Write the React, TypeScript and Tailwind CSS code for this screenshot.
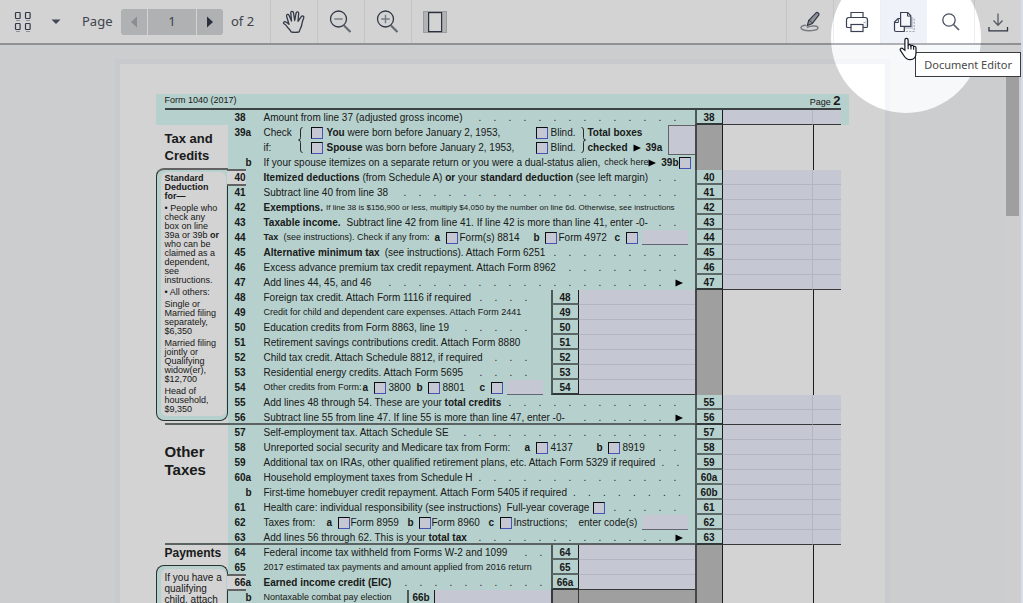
import { useState, type ReactNode } from "react";

/* ---------- Toolbar icons ---------- */

function ThumbnailsIcon() {
  return (
    <svg width="18" height="22" viewBox="0 0 18 22" fill="none" stroke="#3d4556" strokeWidth="1.2">
      <rect x="1.5" y="1.5" width="4.6" height="6" rx="0.8" />
      <rect x="11.5" y="1.5" width="4.6" height="6" rx="0.8" />
      <rect x="1.5" y="12.5" width="4.6" height="6" rx="0.8" />
      <rect x="11.5" y="12.5" width="4.6" height="6" rx="0.8" />
      <path d="M2 9.5h4M12 9.5h4M2 20.5h4M12 20.5h4" stroke="#aab0b8" />
    </svg>
  );
}

function HandIcon() {
  return (
    <svg width="24" height="24" viewBox="0 0 24 24" fill="#fff" stroke="#3d4556" strokeWidth="1.3" strokeLinejoin="round">
      <path d="M9 21.8C8.300 20 6.500 18.700 5 16.600 4 15.200 3.200 14.500 2 13.800 .8 12.900 1.900 11.300 3.500 11.800 5 12.300 6 13.300 7 14.300L4.600 6.200C4.100 4.300 6.400 3.700 7.100 5.400L9.500 11 8.800 3C8.700 1 11.200.9 11.500 2.800L12.700 10.500 14.100 3C14.500 1.200 16.900 1.600 16.700 3.400L16 11.300 19.300 6.600C20.400 5.200 22.400 6.300 21.700 7.900 20.400 10.800 20.100 13 19.600 15.500 19.100 18 17.600 19.300 17.200 21.800Q13 22.800 9 21.800Z" />
    </svg>
  );
}

function ZoomIcon({ plus = false }: { plus?: boolean }) {
  return (
    <svg width="24" height="24" viewBox="1 0 24 24" fill="none">
      <path d="M16 15.500L22.500 22" stroke="#7c828c" strokeWidth="2.2" />
      <circle cx="10.500" cy="9" r="8" stroke="#3d4556" strokeWidth="1.3" />
      <path d={plus ? "M6.300 9h8.400M10.500 4.800v8.400" : "M6.300 9h8.400"} stroke="#8f959d" strokeWidth="1.4" />
    </svg>
  );
}

function FitPageIcon() {
  return (
    <svg width="24" height="22" viewBox="0 0 24 22">
      <rect x="0.5" y="0.5" width="23" height="21" fill="#d8d9db" stroke="#bcbec2" />
      <rect x="5.6" y="1.6" width="13" height="19" fill="#fff" stroke="#343c4d" strokeWidth="1.2" />
    </svg>
  );
}

function AnnotateIcon() {
  return (
    <svg width="22" height="22" viewBox="0 0 22 22" fill="none">
      <path
        d="M7 14.200c-3.200.2-5 1.200-5 2.500 0 2 4 3.200 8.800 3 4.700-.1 8.200-1.300 8.200-2.900 0-1.500-3-2-5.600-1.700-2.200.3-4.200.7-5.600 1.400"
        stroke="#92979f"
        strokeWidth="1.500"
      />
      <path d="M9.800 9.300L17.300 1.600c.8-.8 3.300 1 2.600 2.300L13.300 12.600l-5 2z" fill="#aeb2b8" stroke="#3d4556" strokeWidth="1.200" />
      <path d="M9.800 9.300c1.500.5 2.700 1.700 3.500 3.300" stroke="#3d4556" />
    </svg>
  );
}

function PrinterIcon() {
  return (
    <svg width="24" height="22" viewBox="0 0 24 22" fill="none" stroke="#3a4152" strokeWidth="1.200">
      <path d="M6 6.500V1.500h12v5" />
      <path d="M6 16.500H2.500A1 1 0 0 1 1.500 15.500V9a2.500 2.500 0 0 1 2.500-2.500h16A2.500 2.500 0 0 1 22.500 9v6.500a1 1 0 0 1-1 1H18" />
      <path d="M21.300 8.500v6.700h-3" stroke="#d3d6db" />
      <rect x="6" y="13.500" width="12" height="7" fill="#fff" />
      <path d="M18.500 11.500h2" stroke="#a4aab4" />
    </svg>
  );
}

function DocumentEditorIcon() {
  return (
    <svg width="24" height="22" viewBox="0 0 24 22" fill="none">
      <path d="M18.500 8h3.700v12.500H13" stroke="#a4a9b3" strokeWidth="1.200" strokeDasharray="2 1.200" />
      <path d="M12.500 16.800H20V6" stroke="#c6cad1" strokeWidth="2" />
      <path d="M8.500 7.500H6L2.500 11v8a1.500 1.500 0 0 0 1.500 1.500H12.300v-5" fill="#f4f6fa" stroke="#3a4152" strokeWidth="1.200" />
      <path d="M6.300 8v3.500H3" stroke="#3a4152" />
      <path d="M8.600 1.500h7.200L18.800 4.800v10.500H8.600z" fill="#f4f6fa" stroke="#3a4152" strokeWidth="1.200" />
      <path d="M15.500 1.800v3.300h3" stroke="#3a4152" />
    </svg>
  );
}

function SearchIcon() {
  return (
    <svg width="20" height="20" viewBox="0 0 20 20" fill="none">
      <circle cx="8" cy="8" r="6.200" stroke="#4a5160" strokeWidth="1.300" />
      <path d="M12.500 12.500L18 18" stroke="#5a606d" strokeWidth="1.700" />
    </svg>
  );
}

function DownloadIcon() {
  return (
    <svg width="22" height="22" viewBox="0 0 22 22" fill="none" strokeWidth="1.300">
      <path d="M11 2.500v11.500M6.500 9.500l4.500 4.700L15.500 9.500" stroke="#6a707b" />
      <path d="M2 16v3.800h18.500V16" stroke="#3a4152" />
    </svg>
  );
}

function PointerIcon() {
  return (
    <svg width="19" height="24" viewBox="0 0 20 25">
      <path
        d="M6.200 13.800V3.100c0-2.400 3.400-2.400 3.400 0v5.600c.7-1.300 2.900-1 3 .5.800-1 2.700-.7 2.800.8.900-.7 2.500-.2 2.500 1.200v5.600c0 4.200-2.300 7-6.200 7-3.400 0-4.700-1.400-6.300-3.900L1.500 14c-1-1.800 1.200-3 2.600-1.800z"
        fill="#fff"
        stroke="#171a24"
        strokeWidth="1.300"
      />
      <path d="M9.600 8.500v4.300M12.600 9v4M15.400 10v3.300" stroke="#171a24" strokeWidth="1.200" />
    </svg>
  );
}

function ToolButton({ label, active, line = "left", children }: { label: string; active?: boolean; line?: "left" | "none"; children: ReactNode }) {
  return (
    <button
      type="button"
      aria-label={label}
      className={`flex h-full w-[47px] items-center justify-center ${line === "left" ? "border-l border-[#eceef1]" : ""} ${active ? "bg-[#eff2f8]" : ""}`}
    >
      {children}
    </button>
  );
}

function Toolbar() {
  const [page, setPage] = useState("1");
  return (
    <header className="flex h-[45px] shrink-0 items-center border-b-2 border-[#adb0b5] bg-white font-['Noto_Sans',sans-serif] text-[13px] text-[#4b5260]">
      <button type="button" aria-label="Thumbnails" className="ml-3.5 flex items-center">
        <ThumbnailsIcon />
      </button>
      <button type="button" aria-label="Thumbnail options" className="ml-[18px] flex items-center">
        <svg width="12" height="6" viewBox="0 0 12 6">
          <path d="M1.500 0.500h9L6 5z" fill="#4e5666" />
        </svg>
      </button>
      <label htmlFor="page-number" className="ml-5 w-[39px]">
        Page
      </label>
      <div className="flex h-[26px] gap-px overflow-hidden rounded-[3px]">
        <button type="button" aria-label="Previous page" className="flex w-[26px] items-center justify-center bg-[#d5d6d8]" onClick={() => setPage("1")}>
          <svg width="8" height="12" viewBox="0 0 8 12">
            <path d="M7 0.500v11L1 6z" fill="#a7abb1" />
          </svg>
        </button>
        <input
          id="page-number"
          value={page}
          onChange={(e) => setPage(e.target.value)}
          className="w-[48px] bg-[#d5d6d8] text-center outline-none"
        />
        <button type="button" aria-label="Next page" className="flex w-[26px] items-center justify-center bg-[#d5d6d8]" onClick={() => setPage("2")}>
          <svg width="8" height="12" viewBox="0 0 8 12">
            <path d="M1 0.500v11L7 6z" fill="#333b49" />
          </svg>
        </button>
      </div>
      <span className="ml-2 w-[39px]">of 2</span>
      <ToolButton label="Pan">
        <HandIcon />
      </ToolButton>
      <ToolButton label="Zoom out">
        <ZoomIcon />
      </ToolButton>
      <ToolButton label="Zoom in">
        <ZoomIcon plus />
      </ToolButton>
      <ToolButton label="Fit page">
        <FitPageIcon />
      </ToolButton>
      <div className="ml-auto flex h-full">
        <ToolButton label="Annotate">
          <AnnotateIcon />
        </ToolButton>
        <ToolButton label="Print">
          <PrinterIcon />
        </ToolButton>
        <ToolButton label="Document Editor" active>
          <DocumentEditorIcon />
        </ToolButton>
        <ToolButton label="Search" line="none">
          <SearchIcon />
        </ToolButton>
        <ToolButton label="Download">
          <DownloadIcon />
        </ToolButton>
      </div>
    </header>
  );
}

/* ---------- Form parts ---------- */

function Check({ label }: { label: string }) {
  return (
    <input
      type="checkbox"
      aria-label={label}
      className="size-3 shrink-0 appearance-none border border-t-[#111] border-r-[#5866d8] border-b-[#5866d8] border-l-[#111] bg-[#eff1ff] checked:bg-[#5866d8]"
    />
  );
}

function Arrow() {
  return (
    <svg width="8" height="8" viewBox="0 0 8 8" className="shrink-0">
      <path d="M0.500 0.500L8 4L0.500 7.500z" fill="#000" />
    </svg>
  );
}

function Brace({ flip = false }: { flip?: boolean }) {
  return (
    <svg width="5" height="26" viewBox="0 0 5 26" fill="none" stroke="#333" className="shrink-0">
      <path d={flip ? "M0.500 0.500Q2.500 .5 2.500 3V10.500Q2.500 13 4.500 13Q2.500 13 2.500 15.500V23Q2.500 25.500 .5 25.500" : "M4.500 0.500Q2.500 .5 2.500 3V10.500Q2.500 13 .5 13Q2.500 13 2.500 15.500V23Q2.500 25.500 4.500 25.500"} />
    </svg>
  );
}

function Leaders({ count, arrow, end = "wide" }: { count: number; arrow?: boolean; end?: "wide" | "inner" | "tight" }) {
  const pad = { wide: "pr-3", inner: "pr-[17px]", tight: "pr-0.5" }[end];
  return (
    <span aria-hidden="true" className={`ml-auto flex shrink-0 ${pad}`}>
      {Array.from({ length: count }, (_, i) => (
        <span key={i} className="w-[15px] text-center">
          .
        </span>
      ))}
      {arrow && (
        <span className="flex w-[15px] items-center justify-end">
          <Arrow />
        </span>
      )}
    </span>
  );
}

function Field({ label, className }: { label: string; className: string }) {
  return <input type="text" aria-label={label} className={`h-[15px] border-b border-[#77798a] bg-[#eff1ff] outline-none ${className}`} />;
}

function Amount({ id, last, compact }: { id: string; last?: boolean; compact?: boolean }) {
  const line = last ? "border-b-[#444]" : "border-b-[#d9dbe9]";
  return (
    <div className={`flex h-[15px] ${compact ? "flex-1" : "w-[118px]"}`}>
      <input type="text" aria-label={`Line ${id} dollars`} className={`min-w-0 flex-1 border-r border-b border-r-[#d9dbe9] bg-[#eff1ff] outline-none ${line}`} />
      <input type="text" aria-label={`Line ${id} cents`} className={`w-[28px] border-b bg-[#eff1ff] outline-none ${line}`} />
    </div>
  );
}

function LineBox({ id, last }: { id: string; last?: boolean }) {
  return (
    <div className={`flex h-[15px] w-[28px] shrink-0 items-center justify-center border-b-2 border-l-2 border-r border-l-[#5f6d6a] border-r-[#222] pt-0.5 font-bold ${last ? "border-b-[#3c4443]" : "border-b-[#6f7e7b]"}`}>
      {id}
    </div>
  );
}

function Blank() {
  return (
    <div className="flex shrink-0 self-stretch">
      <div className="w-[28px] border-r border-l-2 border-r-[#222] border-l-[#555] bg-[#c0c0c0]" />
      <div className="w-[91px] border-r border-[#222] bg-white" />
      <div className="w-[35px] bg-white" />
    </div>
  );
}

type LineProps = {
  no: string;
  box?: string;
  inner?: string;
  last?: boolean;
  tab?: boolean;
  extend?: boolean;
  children: ReactNode;
};

function Line({ no, box, inner, last, tab, extend, children }: LineProps) {
  return (
    <div className="flex h-[15px] leading-[15px]">
      <div
        className={`shrink-0 font-bold whitespace-nowrap ${tab ? "relative -mt-px -ml-px h-[17px] w-[19px] border-y-2 border-[#777] bg-white pl-2 leading-[13px]" : "w-[18px] pl-[7px]"} ${no === "b" ? "text-right" : ""}`}
      >
        {no === "b" ? <span className="-mr-1.5">b</span> : no}
      </div>
      <div className="ml-[18px] flex min-w-0 flex-1 items-center whitespace-nowrap">{children}</div>
      {inner && (
        <div className="flex w-[144px] shrink-0">
          <LineBox id={inner} last={last} />
          <Amount id={inner} last={last} compact />
        </div>
      )}
      {box ? (
        <>
          <LineBox id={box} last={last} />
          <Amount id={box} last={last} />
          <div className={`w-2 shrink-0 ${extend ? "" : "bg-white"}`} />
        </>
      ) : (
        <Blank />
      )}
    </div>
  );
}

const B = ({ children }: { children: ReactNode }) => <b className="font-bold">{children}</b>;

function Section({ aside, children }: { aside: ReactNode; children: ReactNode }) {
  return (
    <section className="flex">
      <div className="flex w-[72px] shrink-0 flex-col">{aside}</div>
      <div className="min-w-0 flex-1 bg-[#dcfdf8]">{children}</div>
    </section>
  );
}

function Rule() {
  return (
    <div className="-mt-0.5 flex">
      <div className="ml-[9px] h-0.5 flex-1 bg-[#6d7876]" />
      <div className="w-[154px]" />
    </div>
  );
}

function TaxForm() {
  return (
    <article className="font-['Liberation_Sans',Arial,sans-serif] text-[10px] text-[#1d2322]">
      <div className="bg-[#dcfdf8]">
        <div className="mr-2 ml-[9px] flex h-4 items-center justify-between border-b-2 border-[#4a5250]">
          <span className="text-[9px]">Form 1040 (2017)</span>
          <span className="text-[9px] leading-[13px]">
            Page <b className="text-[13px]">2</b>
          </span>
        </div>
        <div className="pl-[72px]">
          <Line no="38" box="38" last extend>
            Amount from line 37 (adjusted gross income)
            <Leaders count={14} />
          </Line>
        </div>
      </div>

      <Section
        aside={
          <>
            <h2 className="h-[43px] pt-[5px] pl-[9px] text-[13px] leading-[17px] font-bold">
              Tax and
              <br />
              Credits
            </h2>
            <div className="h-[253px] rounded-l-lg rounded-br-lg border border-t-2 border-[#333a39] border-t-[#777] bg-[#dcfdf8] pt-0.5 pr-px pb-1 pl-1">
              <div className="flex h-full flex-col gap-[3px] rounded-md bg-white pt-0.5 pl-1 text-[9px] leading-[9px] whitespace-nowrap">
                <p className="font-bold">
                  Standard
                  <br />
                  Deduction
                  <br />
                  for—
                </p>
                <p>
                  • People who
                  <br />
                  check any
                  <br />
                  box on line
                  <br />
                  39a or 39b <B>or</B>
                  <br />
                  who can be
                  <br />
                  claimed as a<br />
                  dependent,
                  <br />
                  see
                  <br />
                  instructions.
                </p>
                <p>• All others:</p>
                <p>
                  Single or
                  <br />
                  Married filing
                  <br />
                  separately,
                  <br />
                  $6,350
                </p>
                <p>
                  Married filing
                  <br />
                  jointly or
                  <br />
                  Qualifying
                  <br />
                  widow(er),
                  <br />
                  $12,700
                </p>
                <p>
                  Head of
                  <br />
                  household,
                  <br />
                  $9,350
                </p>
              </div>
            </div>
          </>
        }
      >
        <div className="flex h-[45px]">
          <div className="min-w-0 flex-1">
            <div className="flex h-[30px] leading-[15px] whitespace-nowrap">
              <div className="w-9 pl-[7px] font-bold">39a</div>
              <div className="w-[34px]">
                Check
                <br />
                if:
              </div>
              <div className="flex w-[13px] items-center">
                <Brace />
              </div>
              <div className="w-[225px]">
                <div className="flex h-[15px] items-center gap-1">
                  <Check label="You were born before January 2, 1953" />
                  <span>
                    <B>You</B> were born before January 2, 1953,
                  </span>
                </div>
                <div className="flex h-[15px] items-center gap-1">
                  <Check label="Spouse was born before January 2, 1953" />
                  <span>
                    <B>Spouse</B> was born before January 2, 1953,
                  </span>
                </div>
              </div>
              <div className="w-[45px]">
                <label className="flex h-[15px] items-center gap-[3px]">
                  <Check label="You are blind" />
                  Blind.
                </label>
                <label className="flex h-[15px] items-center gap-[3px]">
                  <Check label="Spouse is blind" />
                  Blind.
                </label>
              </div>
              <div className="flex w-[7px] items-center">
                <Brace flip />
              </div>
              <div className="flex-1 font-bold">
                Total boxes
                <div className="flex items-center gap-[5px]">
                  checked <Arrow /> 39a
                </div>
              </div>
              <input type="text" aria-label="Total boxes checked" className="h-[30px] w-[27px] border border-r-0 border-[#777] bg-[#eff1ff] outline-none" />
            </div>
            <div className="flex h-[15px] items-center leading-[15px] whitespace-nowrap">
              <div className="w-9 pl-[18px] font-bold">b</div>
              <span>If your spouse itemizes on a separate return or you were a dual-status alien,</span>
              <span className="ml-1 text-[9px]">check here</span>
              <Arrow />
              <span className="ml-auto font-bold">39b</span>
              <span className="flex w-4">
                <Check label="Line 39b" />
              </span>
            </div>
          </div>
          <Blank />
        </div>
        <Line no="40" box="40" tab>
          <span>
            <B>Itemized deductions</B> (from Schedule A) <B>or</B> your <B>standard deduction</B> (see left margin)
          </span>
          <Leaders count={2} />
        </Line>
        <Line no="41" box="41">
          Subtract line 40 from line 38
          <Leaders count={19} />
        </Line>
        <Line no="42" box="42">
          <B>Exemptions.</B>
          <span className="ml-[3px] text-[8px]">If line 38 is $156,900 or less, multiply $4,050 by the number on line 6d. Otherwise, see instructions</span>
        </Line>
        <Line no="43" box="43">
          <B>Taxable income.</B>
          <span className="ml-1.5">Subtract line 42 from line 41. If line 42 is more than line 41, enter -0-</span>
          <Leaders count={2} />
        </Line>
        <Line no="44" box="44">
          <span className="w-5 text-[9px] font-bold">Tax</span>
          <span className="w-[151px] text-[9px]">(see instructions). Check if any from:</span>
          <span className="w-[11px] font-bold">a</span>
          <Check label="Form 8814" />
          <span className="ml-0.5 w-[74px]">Form(s) 8814</span>
          <span className="w-[11px] font-bold">b</span>
          <Check label="Form 4972" />
          <span className="ml-0.5 w-[56px]">Form 4972</span>
          <span className="w-[11px] font-bold">c</span>
          <Check label="Other form" />
          <Field label="Other form number" className="ml-1 w-[46px]" />
        </Line>
        <Line no="45" box="45">
          <B>Alternative minimum tax</B>
          <span className="ml-[5px]">(see instructions). Attach Form 6251</span>
          <Leaders count={9} />
        </Line>
        <Line no="46" box="46">
          Excess advance premium tax credit repayment. Attach Form 8962
          <Leaders count={8} />
        </Line>
        <Line no="47" box="47" last>
          Add lines 44, 45, and 46
          <Leaders count={19} arrow />
        </Line>
        <Line no="48" inner="48">
          Foreign tax credit. Attach Form 1116 if required
          <Leaders count={4} end="inner" />
        </Line>
        <Line no="49" inner="49">
          <span className="text-[9px]">Credit for child and dependent care expenses. Attach Form 2441</span>
        </Line>
        <Line no="50" inner="50">
          Education credits from Form 8863, line 19
          <Leaders count={5} end="inner" />
        </Line>
        <Line no="51" inner="51">
          Retirement savings contributions credit. Attach Form 8880
        </Line>
        <Line no="52" inner="52">
          Child tax credit. Attach Schedule 8812, if required
          <Leaders count={3} end="inner" />
        </Line>
        <Line no="53" inner="53">
          Residential energy credits. Attach Form 5695
          <Leaders count={4} end="inner" />
        </Line>
        <Line no="54" inner="54" last>
          <span className="w-[99px] text-[9px]">Other credits from Form:</span>
          <span className="w-[11px] font-bold">a</span>
          <Check label="Form 3800" />
          <span className="ml-[3px] w-7">3800</span>
          <span className="w-[11px] font-bold">b</span>
          <Check label="Form 8801" />
          <span className="ml-[3px] w-[37px]">8801</span>
          <span className="w-[11px] font-bold">c</span>
          <Check label="Other credit form" />
          <Field label="Other credit form number" className="ml-1 w-9" />
        </Line>
        <Line no="55" box="55">
          <span>
            Add lines 48 through 54. These are your <B>total credits</B>
          </span>
          <Leaders count={12} />
        </Line>
        <Line no="56" box="56" last>
          Subtract line 55 from line 47. If line 55 is more than line 47, enter -0-
          <Leaders count={6} arrow />
        </Line>
      </Section>
      <Rule />

      <Section
        aside={
          <h2 className="pt-[18px] pl-[9px] text-[15px] leading-[18px] font-bold">
            Other
            <br />
            Taxes
          </h2>
        }
      >
        <Line no="57" box="57">
          Self-employment tax. Attach Schedule SE
          <Leaders count={15} />
        </Line>
        <Line no="58" box="58">
          <span className="w-[261px]">Unreported social security and Medicare tax from Form:</span>
          <span className="w-[11px] font-bold">a</span>
          <Check label="Form 4137" />
          <span className="ml-[3px] w-[46px]">4137</span>
          <span className="w-[11px] font-bold">b</span>
          <Check label="Form 8919" />
          <span className="ml-[3px]">8919</span>
          <Leaders count={2} />
        </Line>
        <Line no="59" box="59">
          Additional tax on IRAs, other qualified retirement plans, etc. Attach Form 5329 if required
          <Leaders count={2} />
        </Line>
        <Line no="60a" box="60a">
          Household employment taxes from Schedule H
          <Leaders count={14} />
        </Line>
        <Line no="b" box="60b">
          First-time homebuyer credit repayment. Attach Form 5405 if required
          <Leaders count={8} />
        </Line>
        <Line no="61" box="61">
          <span className="w-[243px]">Health care: individual responsibility (see instructions)</span>
          <span className="w-[86px]">Full-year coverage</span>
          <Check label="Full-year coverage" />
          <Leaders count={5} />
        </Line>
        <Line no="62" box="62">
          <span className="w-[63px]">Taxes from:</span>
          <span className="w-[11px] font-bold">a</span>
          <Check label="Form 8959" />
          <span className="ml-px w-[57px]">Form 8959</span>
          <span className="w-[11px] font-bold">b</span>
          <Check label="Form 8960" />
          <span className="ml-px w-[57px]">Form 8960</span>
          <span className="w-[11px] font-bold">c</span>
          <Check label="Instructions" />
          <span className="ml-0.5 w-[65px]">Instructions;</span>
          <span className="w-[63px]">enter code(s)</span>
          <Field label="Codes" className="w-[46px]" />
        </Line>
        <Line no="63" box="63" last>
          <span>
            Add lines 56 through 62. This is your <B>total tax</B>
          </span>
          <Leaders count={13} arrow />
        </Line>
      </Section>
      <Rule />

      <Section
        aside={
          <>
            <h2 className="h-5 pl-[9px] text-[12px] leading-[17px] font-bold">Payments</h2>
            <div className="flex-1 rounded-t-lg border border-b-0 border-[#333a39] bg-[#dcfdf8] pt-[3px] pr-px pl-1">
              <p className="h-full rounded-t-md bg-white pt-[3px] pl-1 text-[10px] leading-[11px] whitespace-nowrap">
                If you have a<br />
                qualifying
                <br />
                child, attach
              </p>
            </div>
          </>
        }
      >
        <Line no="64" inner="64">
          Federal income tax withheld from Forms W-2 and 1099
          <Leaders count={2} end="tight" />
        </Line>
        <Line no="65" inner="65">
          <span className="text-[9px]">2017 estimated tax payments and amount applied from 2016 return</span>
        </Line>
        <Line no="66a" inner="66a" last tab>
          <B>Earned income credit (EIC)</B>
          <Leaders count={10} end="tight" />
        </Line>
        <div className="flex h-[30px] leading-[15px]">
          <div className="w-9 pl-[18px] font-bold">b</div>
          <div className="flex-1 text-[9px] whitespace-nowrap">Nontaxable combat pay election</div>
          <div className="flex h-[15px] w-[144px]">
            <LineBox id="66b" />
            <Amount id="66b" compact />
          </div>
          <div className="w-[28px] border-r border-l-2 border-[#444] bg-[#c0c0c0]" />
          <div className="w-[116px] bg-[#c0c0c0]" />
          <Blank />
        </div>
      </Section>
    </article>
  );
}

export default function App() {
  return (
    <div className="relative flex h-screen flex-col overflow-hidden border-r-2 border-[#d8dde8] bg-[#f7f8fa]">
      <Toolbar />
      <div className="flex min-h-0 flex-1">
        <main className="min-w-0 flex-1 overflow-hidden pt-[19px]">
          <div className="mx-auto w-full max-w-[765px] bg-white px-9 pt-[30px] shadow-[0_0_0_5px_#f3f5f9]">
            <TaxForm />
          </div>
        </main>
        <div className="w-[17px] shrink-0 bg-[#f9f9fa] px-0.5 pt-[17px]">
          <div className="h-[154px] bg-[#c1c1c1]" />
        </div>
      </div>

      <div className="pointer-events-none absolute -top-[37px] right-10 size-[150px] rounded-full shadow-[0_0_0_1200px_rgba(0,0,0,0.173)]" />
      <div role="tooltip" className="absolute top-[52px] right-0 border border-[#3b3b3b] bg-white px-2 font-['Noto_Sans',sans-serif] text-[11px] leading-[23px] text-[#4a4a4a]">
        Document Editor
      </div>
      <div className="pointer-events-none absolute top-[37px] right-[103px]">
        <PointerIcon />
      </div>
    </div>
  );
}
